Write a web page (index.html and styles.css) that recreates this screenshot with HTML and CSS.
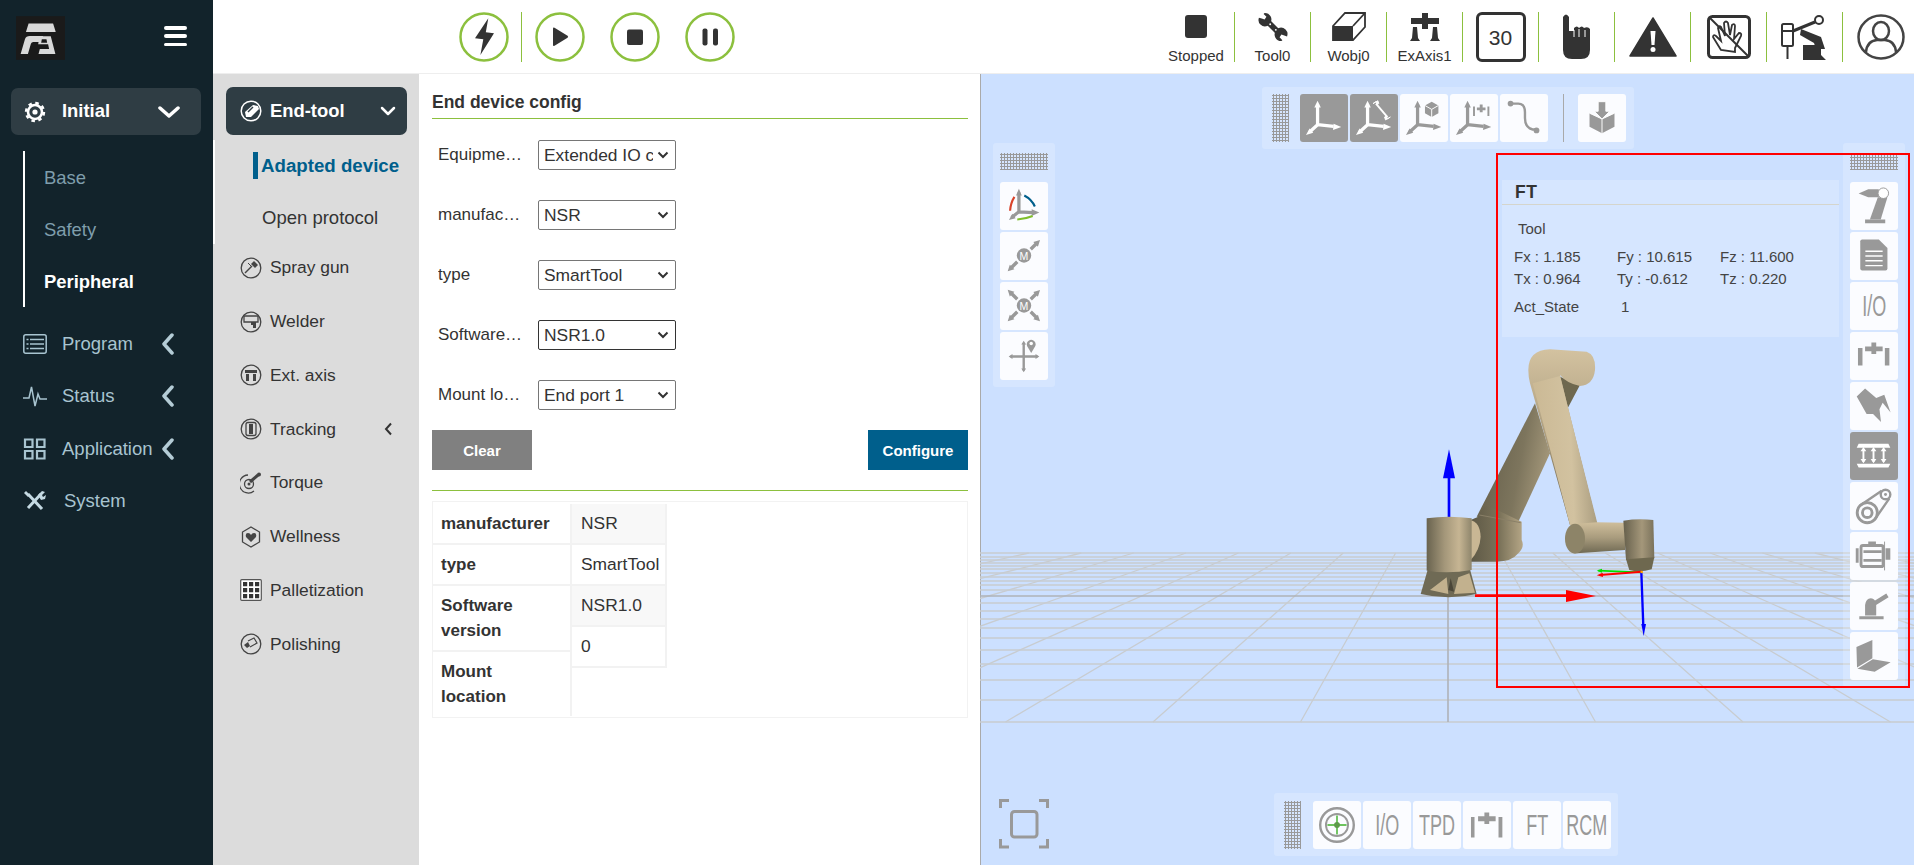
FILE: index.html
```html
<!DOCTYPE html>
<html lang="en">
<head>
<meta charset="utf-8">
<title>Robot controller</title>
<link rel="stylesheet" href="styles.css">
</head>
<body>
<svg class="defs" width="0" height="0">
  <defs>
    <symbol id="axes" viewBox="0 0 50 50">
      <path d="M18.3 32V11M18.3 32L35 33.8M18.3 32L10 39.5" fill="none" stroke="currentColor" stroke-width="3.400"/>
      <path d="M18.3 7l-3.4 7h6.8zM43 34.5l-8-3.600-.6 6.600zM6.200 42.800l7.600-2.400-3.800-4.400z" fill="currentColor"/>
    </symbol>
    <symbol id="arrowset" viewBox="0 0 50 50">
      <path d="M8 41l7-2.200-4.800-4.800zM41.700 8.300l-7 2.200 4.800 4.800z" fill="#999"/>
      <path d="M12 37l6-6M38 12l-6 6" stroke="#999" stroke-width="3.500"/>
      <circle cx="25" cy="24.500" r="7.500" fill="#999"/>
      <text x="25" y="29" class="m-letter">M</text>
    </symbol>
  </defs>
</svg>

<aside class="sidebar">
  <div class="brand">
    <svg class="logo" viewBox="48 48 148 132" width="49" height="44">
      <rect x="48" y="48" width="148" height="132" fill="#1a1a1a"/>
      <path d="M86 70h74l8 26H78z" fill="#d9d9d9"/>
      <path d="M62 162l13-44q3-10 15-10h40l-5 18h-25q-5 0-7 5l-9 31z" fill="#d9d9d9"/>
      <path d="M116 162l4-15h28l-3-14h-30l4-24h34l14 53z" fill="#d9d9d9"/>
      <path d="M124 128h18l-2-10h-14z" fill="#1a1a1a"/>
    </svg>
    <div class="burger"><i></i><i></i><i></i></div>
  </div>

  <div class="pill main-pill">
    <svg class="side-icon" viewBox="0 0 24 24" width="24" height="24">
      <circle cx="12" cy="12" r="7" fill="none" stroke="#fff" stroke-width="2.600"/>
      <circle cx="12" cy="12" r="2.600" fill="#fff"/>
      <circle cx="12" cy="12" r="9" fill="none" stroke="#fff" stroke-width="2.400" stroke-dasharray="3.500 3.570"/>
    </svg>
    <span class="pill-label">Initial</span>
    <svg class="pill-chev" viewBox="0 0 22 12" width="22" height="12"><path d="M2 2l9 8 9-8" fill="none" stroke="#fff" stroke-width="3.500" stroke-linecap="round" stroke-linejoin="round"/></svg>
  </div>

  <ul class="side-sub">
    <li>Base</li>
    <li>Safety</li>
    <li class="current">Peripheral</li>
  </ul>

  <ul class="side-main">
    <li>
      <svg class="side-icon" viewBox="0 0 24 20" width="24" height="20"><rect x=".8" y=".8" width="22.400" height="18.400" rx="2" fill="none" stroke="#a8c4d0" stroke-width="1.500"/><path d="M7 5.500h14M7 10h14M7 14.500h14M3.500 5.500h2M3.500 10h2M3.500 14.500h2" stroke="#a8c4d0" stroke-width="1.500"/></svg>
      <span>Program</span>
      <svg class="side-chev" viewBox="0 0 14 22" width="14" height="22"><path d="M11 2L3 11l8 9" fill="none" stroke="#b4ccd6" stroke-width="3.500" stroke-linecap="round" stroke-linejoin="round"/></svg>
    </li>
    <li>
      <svg class="side-icon" viewBox="0 0 24 22" width="24" height="22"><path d="M0 13h6l2.500-11 3.500 19 3-12 2 5h7" fill="none" stroke="#a8c4d0" stroke-width="1.500"/></svg>
      <span>Status</span>
      <svg class="side-chev" viewBox="0 0 14 22" width="14" height="22"><path d="M11 2L3 11l8 9" fill="none" stroke="#b4ccd6" stroke-width="3.500" stroke-linecap="round" stroke-linejoin="round"/></svg>
    </li>
    <li>
      <svg class="side-icon" viewBox="0 0 24 22" width="24" height="22"><path d="M2 1.500h7.500v7.500H2zM14 1.500h7.500v7.500H14zM2 13h7.500v7.500H2zM14 13h7.500v7.500H14z" fill="none" stroke="#a8c4d0" stroke-width="2.200"/></svg>
      <span>Application</span>
      <svg class="side-chev" viewBox="0 0 14 22" width="14" height="22"><path d="M11 2L3 11l8 9" fill="none" stroke="#b4ccd6" stroke-width="3.500" stroke-linecap="round" stroke-linejoin="round"/></svg>
    </li>
    <li class="sys">
      <svg class="side-icon" viewBox="0 0 24 22" width="24" height="22"><path d="M5 18L18 4M5 4l14 15" stroke="#c5dae3" stroke-width="3"/><path d="M15 5l4-4 3 1-3 3 1 2 3-2-1 4-4 1z" fill="#c5dae3"/><path d="M3 1l4 4-2 2-4-4z" fill="#c5dae3"/></svg>
      <span>System</span>
    </li>
  </ul>
</aside>

<div class="workspace">
  <header class="topbar">
    <div class="run-group">
      <button class="round" type="button"><svg viewBox="0 0 50 50" width="50" height="50"><circle cx="25" cy="25" r="23.500" class="ring"/><path d="M29.300 6.300L16 26.300l8.300 1L21.400 43 35 21.300l-8.200-1z" fill="#333"/></svg></button>
      <span class="run-sep"></span>
      <button class="round" type="button"><svg viewBox="0 0 50 50" width="50" height="50"><circle cx="25" cy="25" r="23.500" class="ring"/><path d="M18 16.500q0-1.500 1.500-.8l13 8q1.300 1 0 2l-13 8q-1.500.7-1.500-.8z" fill="#333"/></svg></button>
      <button class="round" type="button"><svg viewBox="0 0 50 50" width="50" height="50"><circle cx="25" cy="25" r="23.500" class="ring"/><rect x="17" y="17.500" width="16" height="15.500" rx="2" fill="#333"/></svg></button>
      <button class="round" type="button"><svg viewBox="0 0 50 50" width="50" height="50"><circle cx="25" cy="25" r="23.500" class="ring"/><rect x="17.500" y="16.500" width="5" height="17" rx="2" fill="#333"/><rect x="28" y="16.500" width="5" height="17" rx="2" fill="#333"/></svg></button>
    </div>
    <div class="status-group">
      <div class="stat labelled">
        <svg viewBox="0 0 30 30" width="30" height="30"><rect x="4" y="3" width="22" height="23" rx="3" fill="#333"/></svg>
        <span>Stopped</span>
      </div>
      <div class="stat labelled">
        <svg viewBox="0 0 32 32" width="30" height="30"><path d="M9 9l15 15" stroke="#333" stroke-width="6"/><path d="M1 6a7 7 0 0 0 9 9l3-3a7 7 0 0 0-6-11L6 2l3 3-2 3-3-1z" fill="#333"/><path d="M31 26a7 7 0 0 0-9-9l-3 3a7 7 0 0 0 6 11l1-1-3-3 2-3 3 1z" fill="#333"/><circle cx="13" cy="13" r="1" fill="#fff"/><circle cx="19" cy="19" r="1" fill="#fff"/></svg>
        <span>Tool0</span>
      </div>
      <div class="stat labelled">
        <svg viewBox="0 0 34 30" width="34" height="30"><path d="M1 14L13 1h20v14L21 28H1z" fill="#fff" stroke="#333" stroke-width="1.800"/><path d="M1 14h20v14H1z" fill="#333"/><path d="M21 14L33 1" stroke="#333" stroke-width="1.800"/></svg>
        <span>Wobj0</span>
      </div>
      <div class="stat labelled">
        <svg viewBox="0 0 30 30" width="30" height="30"><path d="M12 1h6v5h11v6H18v5h-6v-5H1V6h11z" fill="#333"/><path d="M3 15h4l1 11 2 3H0l2-3zM23 15h4l1 11 2 3H20l2-3z" fill="#333"/></svg>
        <span>ExAxis1</span>
      </div>
      <div class="stat"><div class="speed">30</div></div>
      <div class="stat">
        <svg viewBox="0 0 30 46" width="30" height="46"><path d="M1 3q3-5 6 0v14h5v-3q3-3 5 0 3-3 5 0 4-2 6 1v21q0 9-9 9H10q-9 0-9-9z" fill="#333"/><path d="M12 16v7M17 15v8M23 16v7" stroke="#fff" stroke-width="1"/></svg>
      </div>
      <div class="stat">
        <svg viewBox="0 0 48 40" width="48" height="40"><path d="M24 1L47 39H1z" fill="#333" stroke="#333" stroke-linejoin="round" stroke-width="1.500"/><path d="M21.500 14h5l-1 14h-3z" fill="#fff"/><circle cx="24" cy="32.500" r="2.500" fill="#fff"/></svg>
      </div>
      <div class="stat">
        <svg viewBox="0 0 44 44" width="44" height="44"><rect x="1.500" y="1.500" width="41" height="41" rx="4" fill="none" stroke="#333" stroke-width="3"/><path d="M3 3l38 38" stroke="#333" stroke-width="2"/><path d="M14 35l-8-13q0-3 3-1l5 5-3-13q1-3 3-1l4 9-1-13q2-3 4 0l2 12 2-10q3-2 3 1l-1 13 5-6q3 0 2 3l-6 12v4z" fill="none" stroke="#333" stroke-width="1.800"/></svg>
      </div>
      <div class="stat">
        <svg viewBox="0 0 48 46" width="48" height="46"><rect x="1" y="10" width="11" height="22" rx="1.500" fill="none" stroke="#333" stroke-width="2"/><path d="M1 17h11M6.500 32v13" stroke="#333" stroke-width="2"/><path d="M12 17l22-9" stroke="#333" stroke-width="3" fill="none"/><path d="M20 15l20 8 4 12h-9l-2-6-14-8z" fill="#333"/><path d="M22 46V31h18v10l5 5z" fill="#333"/><circle cx="38" cy="6" r="4" fill="#fff" stroke="#333" stroke-width="2"/></svg>
      </div>
      <div class="stat">
        <svg viewBox="0 0 48 46" width="48" height="46"><ellipse cx="24" cy="23" rx="22.500" ry="21.500" fill="none" stroke="#444" stroke-width="2.500"/><ellipse cx="24" cy="17" rx="8" ry="9" fill="none" stroke="#444" stroke-width="2.500"/><path d="M9 38q1-11 11-12h8q10 1 11 12" fill="none" stroke="#444" stroke-width="2.500"/></svg>
      </div>
    </div>
  </header>

  <div class="body-row">
    <nav class="subnav">
      <span class="edge"></span>
      <div class="pill sub-pill">
        <svg class="nav-icon" viewBox="0 0 22 22" width="22" height="22"><circle cx="11" cy="11" r="9.800" fill="none" stroke="#fff" stroke-width="1.500"/><path d="M6 17l-1-5 8-7 5 1 1 3-8 8z" fill="#fff"/><path d="M8 12l5-5" stroke="#2f3d44" stroke-width="1.500"/></svg>
        <span class="pill-label">End-tool</span>
        <svg class="sub-chev" viewBox="0 0 16 10" width="16" height="10"><path d="M2 2l6 6 6-6" fill="none" stroke="#fff" stroke-width="2.500" stroke-linecap="round" stroke-linejoin="round"/></svg>
      </div>
      <ul class="nav-children">
        <li class="selected"><span>Adapted device</span></li>
        <li>Open protocol</li>
      </ul>
      <ul class="nav-list">
        <li><svg class="nav-icon" viewBox="0 0 22 22" width="22" height="22"><circle cx="11" cy="11" r="9.800" class="nc"/><path d="M5 16l7-7" stroke="#444" stroke-width="1.500"/><path d="M11 7l3-3 4 4-3 3z" fill="#444"/><path d="M8 6l3 3" stroke="#444"/></svg>Spray gun</li>
        <li><svg class="nav-icon" viewBox="0 0 22 22" width="22" height="22"><circle cx="11" cy="11" r="9.800" class="nc"/><path d="M4 5h14v6H4z" fill="none" stroke="#444" stroke-width="1.300"/><path d="M11 11h5v6h-3v-3h-2z" fill="#444"/></svg>Welder</li>
        <li><svg class="nav-icon" viewBox="0 0 22 22" width="22" height="22"><circle cx="11" cy="11" r="9.800" class="nc"/><path d="M5 6h12v3H5zM6 10h3v7H6zM13 10h3v7h-3z" fill="#444"/></svg>Ext. axis</li>
        <li><svg class="nav-icon" viewBox="0 0 22 22" width="22" height="22"><circle cx="11" cy="11" r="9.800" class="nc"/><rect x="6" y="4.500" width="10" height="13" rx="2" fill="none" stroke="#444" stroke-width="1.300"/><path d="M9 6h4v10H9z" fill="#444"/></svg>Tracking<svg class="track-chev" viewBox="0 0 9 14" width="9" height="14"><path d="M7 1.500L2 7l5 5.500" fill="none" stroke="#333" stroke-width="2"/></svg></li>
        <li><svg class="nav-icon" viewBox="0 0 22 22" width="22" height="22"><path d="M14 19a9 9 0 1 1-6-16" class="nc"/><circle cx="9" cy="12" r="4.500" class="nc"/><circle cx="9" cy="12" r="1.500" fill="#444"/><path d="M10 10l8-7" stroke="#444" stroke-width="3"/><circle cx="19" cy="2.500" r="2" fill="#444"/></svg>Torque</li>
        <li><svg class="nav-icon" viewBox="0 0 22 22" width="22" height="22"><path d="M11 1l8.500 5v10L11 21l-8.500-5V6z" class="nc"/><path d="M11 16l-5-5q-1-4 2-4 2 0 3 2 1-2 3-2 3 0 2 4z" fill="#444"/></svg>Wellness</li>
        <li><svg class="nav-icon" viewBox="0 0 22 22" width="22" height="22"><rect x=".7" y=".7" width="20.600" height="20.600" rx="1" fill="#fff" stroke="#555" stroke-width="1.200"/><path d="M3 3h4.200v4.200H3zM9 3h4.200v4.200H9zM15 3h4.200v4.200H15zM3 9h4.200v4.200H3zM9 9h4.200v4.200H9zM15 9h4.200v4.200H15zM3 15h4.200v4.200H3zM9 15h4.200v4.200H9zM15 15h4.200v4.200H15z" fill="#333"/></svg>Palletization</li>
        <li><svg class="nav-icon" viewBox="0 0 22 22" width="22" height="22"><circle cx="11" cy="11" r="9.800" class="nc"/><path d="M4 12l4-3 2 4-3 2z" fill="#444"/><path d="M8 8l6-3 3 5-7 4" fill="none" stroke="#444" stroke-width="1.200"/></svg>Polishing</li>
      </ul>
    </nav>

    <main class="config">
      <h2 class="config-title">End device config</h2>
      <div class="form-rows">
        <div class="form-row"><label class="form-label">Equipment type</label><select class="form-select"><option>Extended IO config</option></select></div>
        <div class="form-row"><label class="form-label">manufacturer</label><select class="form-select"><option>NSR</option></select></div>
        <div class="form-row"><label class="form-label">type</label><select class="form-select"><option>SmartTool</option></select></div>
        <div class="form-row"><label class="form-label">Software version</label><select class="form-select focused"><option>NSR1.0</option></select></div>
        <div class="form-row"><label class="form-label">Mount location</label><select class="form-select"><option>End port 1</option></select></div>
      </div>
      <div class="actions">
        <button class="btn btn-clear" type="button">Clear</button>
        <button class="btn btn-conf" type="button">Configure</button>
      </div>
      <div class="summary">
        <table class="sum-keys">
          <tr><th>manufacturer</th></tr>
          <tr><th>type</th></tr>
          <tr><th>Software<br>version</th></tr>
          <tr><th>Mount<br>location</th></tr>
        </table>
        <table class="sum-vals">
          <tr><td>NSR</td></tr>
          <tr><td>SmartTool</td></tr>
          <tr><td>NSR1.0</td></tr>
          <tr><td>0</td></tr>
        </table>
      </div>
    </main>

    <section class="viewport">
      <svg class="scene" viewBox="980 74 934 791" width="934" height="791">
        <defs>
          <linearGradient id="gBase" x1="0" x2="1" y1="0" y2="0"><stop offset="0" stop-color="#69634f"/><stop offset=".4" stop-color="#a4977a"/><stop offset=".72" stop-color="#c6b593"/><stop offset="1" stop-color="#8f866c"/></linearGradient>
          <linearGradient id="gRear" x1="0" x2="1" y1=".3" y2=".6"><stop offset="0" stop-color="#625c48"/><stop offset=".6" stop-color="#7d755d"/><stop offset="1" stop-color="#a89b7d"/></linearGradient>
          <linearGradient id="gFront" x1="0" x2="1" y1=".1" y2="0"><stop offset="0" stop-color="#cbb995"/><stop offset=".55" stop-color="#d2c2a0"/><stop offset="1" stop-color="#a09478"/></linearGradient>
          <linearGradient id="gElbow" x1="0" x2="0" y1="0" y2="1"><stop offset="0" stop-color="#d3c2a0"/><stop offset=".5" stop-color="#ab9c7d"/><stop offset="1" stop-color="#5f5a47"/></linearGradient>
          <linearGradient id="gWrist" x1="0" x2="0" y1="0" y2="1"><stop offset="0" stop-color="#cfbe9b"/><stop offset=".5" stop-color="#a89b7d"/><stop offset="1" stop-color="#6f6953"/></linearGradient>
          <linearGradient id="gTool" x1="0" x2="1" y1="0" y2="0"><stop offset="0" stop-color="#66604c"/><stop offset=".6" stop-color="#a4977a"/><stop offset="1" stop-color="#7a725b"/></linearGradient>
          <linearGradient id="gJoint" x1="0" x2="1" y1="0" y2="0"><stop offset="0" stop-color="#5e5946"/><stop offset=".55" stop-color="#7a7259"/><stop offset="1" stop-color="#b5a686"/></linearGradient>
        </defs>
        <g class="grid-lines">
          <path d="M980 553H1914M980 557H1914M980 560H1914M980 563H1914M980 566H1914M980 569H1914M980 573H1914M980 577H1914M980 581H1914M980 585H1914M980 590H1914M980 603H1914M980 611H1914M980 619H1914M980 628H1914M980 638H1914M980 650H1914M980 664H1914M980 680H1914M980 700H1914M980 722H1914"/>
          <path d="M1500.400 553L1595.500 722M1552.800 553L1743 722M1605.200 553L1890.500 722M1657.600 553L2038 722M1710 553L2185.500 722M1762.400 553L2333 722M1814.800 553L2480.500 722M1867.200 553L2628 722M1395.600 553L1300.500 722M1343.200 553L1153 722M1290.800 553L1005.500 722M1238.400 553L858 722M1186 553L710.500 722M1133.600 553L563 722M1081.200 553L415.500 722M1028.800 553L268 722"/>
        </g>
        <path class="grid-axis" d="M980 596H1914M1448 553V722"/>
        <g transform="translate(1380 340) scale(.33333)">
          <path d="M207 540V410" stroke="#0000ff" stroke-width="8"/>
          <path d="M207 328l-18 87h36z" fill="#0000ff"/>
          <path d="M285 767H570" stroke="#ff0000" stroke-width="8"/>
          <path d="M558 750l90 18-90 18z" fill="#ff0000"/>
          <path d="M290 530L465 190 510 340 415 545z" fill="url(#gRear)"/>
          <path d="M540 110L600 135 555 220 510 170z" fill="#6e684f"/>
          <path d="M295 530Q310 490 330 500L425 545 425 600Q435 620 415 640Q395 665 350 665L272 665V540z" fill="url(#gJoint)"/>
          <path d="M298 525L422 548" stroke="#8a8067" stroke-width="3" fill="none"/>
          <path d="M270 540Q300 545 302 590Q300 630 272 660z" fill="#c9b794"/>
          <path d="M142 693L122 762Q205 782 290 762L270 688z" fill="#6f6a55"/>
          <path d="M150 750L200 712 205 762zM222 762L235 712 268 700 285 758z" fill="#c2b18e"/>
          <path d="M205 750L212 715 222 755z" fill="#4a4638"/>
          <path d="M140 535Q205 525 275 535V690Q205 702 140 692z" fill="url(#gBase)"/>
          <path d="M445 90Q445 30 510 28L620 35Q648 45 645 90Q640 135 600 138Q560 130 540 105L650 550 570 555 450 130Q445 110 445 90z" fill="url(#gElbow)"/>
          <path d="M458 130L540 108 652 550 570 556z" fill="url(#gFront)"/>
          <path d="M585 552L650 547 735 548V630L590 640z" fill="url(#gWrist)"/>
          <ellipse cx="585" cy="596" rx="30" ry="45" fill="#8d8468"/>
          <path d="M730 542Q775 535 820 540L823 655 738 660z" fill="url(#gTool)"/>
          <path d="M738 658L823 652 815 688Q780 698 748 690z" fill="#6e684f"/>
          <path d="M785 697L655 692" stroke="#00e000" stroke-width="5"/>
          <path d="M650 692l16-6v12z" fill="#00e000"/>
          <path d="M785 695L660 705" stroke="#ff0000" stroke-width="6"/>
          <path d="M650 706l18-8 1 13z" fill="#ff0000"/>
          <path d="M784 697L790 860" stroke="#0000ff" stroke-width="7"/>
          <path d="M791 888l-7-36h14z" fill="#0000ff"/>
          <circle cx="785" cy="696" r="4" fill="#ffa500"/>
        </g>
      </svg>

      <div class="tool-panel panel-top">
        <span class="grip grip-v"></span>
        <div class="tool-row">
          <div class="tbtn active"><svg viewBox="0 0 50 50" width="48" height="48"><use href="#axes"/></svg></div>
          <div class="tbtn active"><svg viewBox="0 0 50 50" width="48" height="48"><use href="#axes"/><path d="M27 10l12 14" stroke="#fff" stroke-width="2"/><path d="M24 10l3-2 1 3 2-1-1-3zM42 24l-3 2-1-3-2 1 1 3z" fill="#fff" stroke="#fff"/></svg></div>
          <div class="tbtn"><svg viewBox="0 0 50 50" width="48" height="48"><use href="#axes"/><path d="M33 8l7 4v8l-7 4-7-4v-8z" fill="#999"/><path d="M26 12l7 4 7-4M33 16v8" stroke="#fff" stroke-width="1" fill="none"/></svg></div>
          <div class="tbtn"><svg viewBox="0 0 50 50" width="48" height="48"><use href="#axes"/><path d="M24 13h2v10h-2zM39 13h2v10h-2zM28 14h9v3h-9zM31 11h3v8h-3z" fill="#999"/></svg></div>
          <div class="tbtn"><svg viewBox="0 0 50 50" width="48" height="48"><circle cx="11" cy="10" r="3" fill="#999"/><circle cx="38" cy="38" r="3" fill="#999"/><path d="M13 10h6q7 0 7 9v6q0 10 8 12h3" fill="none" stroke="#999" stroke-width="2.500"/></svg></div>
          <span class="top-sep"></span>
          <div class="tbtn"><svg viewBox="0 0 50 50" width="48" height="48"><path d="M25 26L12 20v14l13 7 13-7V20z" fill="#999"/><path d="M12 20l13 6 13-6M25 26v15" stroke="#fff" fill="none"/><path d="M21 8h8v10h4l-8 8-8-8h4z" fill="#999" stroke="#fff"/></svg></div>
        </div>
      </div>

      <div class="tool-panel panel-left">
        <span class="grip grip-h"></span>
        <div class="tbtn"><svg viewBox="0 0 50 50" width="48" height="48"><path d="M19.700 31V11M19.700 31L35 32M19.700 31L12 37" stroke="#999" stroke-width="3.400" fill="none"/><path d="M19.700 7l-3 7h6zM41 31.700l-8-3.400v7zM9.300 39.700l7-2-3.500-4.500z" fill="#999"/><path d="M15 15.500Q11 22 10.500 30" stroke="#d9432a" stroke-width="2.200" fill="none"/><path d="M25.300 14Q33 18 36.300 25.500" stroke="#005f8c" stroke-width="2.200" fill="none"/><path d="M18 39Q27 38.500 34 35.500" stroke="#7fbf2a" stroke-width="2.200" fill="none"/></svg></div>
        <div class="tbtn"><svg viewBox="0 0 50 50" width="48" height="48"><use href="#arrowset"/></svg></div>
        <div class="tbtn"><svg viewBox="0 0 50 50" width="48" height="48"><use href="#arrowset"/><path d="M8 8l7 2.200-4.800 4.800zM41.700 41l-7-2.200 4.800-4.800z" fill="#999"/><path d="M12 12l6 6M38 37l-6-6" stroke="#999" stroke-width="3.500"/></svg></div>
        <div class="tbtn"><svg viewBox="0 0 50 50" width="48" height="48"><path d="M24.700 12V40M11 25.500H39" stroke="#999" stroke-width="2.500"/><path d="M24.700 9l-2.500 4h5zM24.700 42l-2.500-4h5zM9 25.500l4-2.500v5zM41 25.500l-4-2.500v5z" fill="#999"/><path d="M32.500 22l-4-7a4.600 4.600 0 1 1 8 0z" fill="#999"/><circle cx="32.500" cy="12" r="1.800" fill="#fff"/></svg></div>
      </div>

      <div class="tool-panel panel-right">
        <span class="grip grip-h"></span>
        <div class="tbtn"><svg viewBox="0 0 50 50" width="48" height="48"><path d="M9 12l10-4.500h11V16H19z" fill="#999"/><path d="M29 16h10l-7 23H20.700z" fill="#999"/><path d="M15.700 39h21v4h-21z" fill="#999"/><circle cx="34.700" cy="11.700" r="5.500" fill="#fff" stroke="#999"/></svg></div>
        <div class="tbtn"><svg viewBox="0 0 50 50" width="48" height="48"><path d="M12.700 7.700H30l9 9V38q0 2-2 2H12.700q-2 0-2-2V9.700q0-2 2-2z" fill="#999"/><path d="M16 20h18M16 25h18M16 30h18M16 35h18" stroke="#fff" stroke-width="1.500"/></svg></div>
        <div class="tbtn"><span class="tall">I/O</span></div>
        <div class="tbtn"><svg viewBox="0 0 50 50" width="48" height="48"><path d="M8.300 16.700H13V35H8.300zM36.300 16.700H41V35h-4.700zM15.700 15H22.300V11h5v4H34v5H15.700zM22.300 20h5v3h-5z" fill="#999"/></svg></div>
        <div class="tbtn"><svg viewBox="0 0 50 50" width="48" height="48"><path d="M7 15l8.700-8.300L27.300 16.700l8.400-3.400 6.600 18.400L34 21.700l-3.300 6.600 1.600 13.400L24 33.300h-6.700L10.700 21.700z" fill="#999"/></svg></div>
        <div class="tbtn active"><svg viewBox="0 0 50 50" width="48" height="48"><path d="M9 12.300h31l2 4H7zM7 33h35l-2 4H9z" fill="#fff"/><path d="M14 18v13M24.500 18v13M35 18v13" stroke="#fff" stroke-width="2"/><path d="M14 15.500l-3 4.500h6zM14 32.500l-3-4.500h6zM24.500 15.500l-3 4.500h6zM24.500 32.500l-3-4.500h6zM35 15.500l-3 4.500h6zM35 32.500l-3-4.500h6z" fill="#fff"/></svg></div>
        <div class="tbtn"><svg viewBox="0 0 50 50" width="48" height="48"><circle cx="18" cy="32" r="10.500" fill="none" stroke="#999" stroke-width="3"/><circle cx="18" cy="32" r="5" fill="none" stroke="#999" stroke-width="3"/><circle cx="37" cy="13" r="5" fill="none" stroke="#999" stroke-width="2.500"/><circle cx="37" cy="13" r="1.500" fill="#999"/><path d="M10.500 24.500L33 9M25.500 39.500L41 17" stroke="#999" stroke-width="2.500"/></svg></div>
        <div class="tbtn"><svg viewBox="0 0 50 50" width="48" height="48"><rect x="11.500" y="14" width="23" height="22" rx="2" fill="none" stroke="#999" stroke-width="3"/><path d="M14 19h19v3H14zM14 28h19v3H14zM19 10h8v3h-8zM6 17h3v15H6zM37 17h5v12h-5z" fill="#999"/><path d="M36 10v30" stroke="#999"/></svg></div>
        <div class="tbtn"><svg viewBox="0 0 50 50" width="48" height="48"><path d="M9.700 35.700h25.300v3H9.700zM15.700 35V24q1-7 6-7t5.600 7v11z" fill="#999"/><path d="M26 22l13-8" stroke="#999" stroke-width="4.500"/></svg></div>
        <div class="tbtn"><svg viewBox="0 0 50 50" width="48" height="48"><path d="M6.700 15.700L23.300 8.300v19L7.300 37zM7.800 38.300L23.800 28.500l18.500 3-16.600 9.800z" fill="#999"/></svg></div>
      </div>

      <div class="tool-panel panel-bottom">
        <span class="grip grip-v"></span>
        <div class="tool-row">
          <div class="tbtn"><svg viewBox="0 0 50 50" width="48" height="48"><circle cx="25" cy="25" r="17.500" fill="none" stroke="#999" stroke-width="2.500"/><circle cx="25" cy="25" r="11.500" fill="none" stroke="#999" stroke-width="2"/><path d="M25 15v20M15 25h20" stroke="#3fb02a" stroke-width="1.500"/><circle cx="25" cy="25" r="3" fill="#5c9a4a"/></svg></div>
          <div class="tbtn"><span class="tall">I/O</span></div>
          <div class="tbtn"><span class="tall">TPD</span></div>
          <div class="tbtn"><svg viewBox="0 0 50 50" width="48" height="48"><path d="M8.300 16.700H12V38H8.300zM37 16.700h4V38h-4zM15.700 16H22.300V12h5v4H34v5H15.700zM22.300 21h5v3h-5z" fill="#999"/></svg></div>
          <div class="tbtn"><span class="tall">FT</span></div>
          <div class="tbtn"><span class="tall">RCM</span></div>
        </div>
      </div>

      <svg class="fullscreen" viewBox="0 0 50 50" width="50" height="50">
        <rect x="12.500" y="12.500" width="25.500" height="25.500" rx="3" fill="none" stroke="#999" stroke-width="3"/>
        <path d="M1.500 9V1.500H10M40 1.500h8.500V9M1.500 40v8h8.500M40 48h8.500v-8" fill="none" stroke="#999" stroke-width="3"/>
      </svg>

      <div class="ft-panel">
        <h3 class="ft-title">FT</h3>
        <div class="ft-tool">Tool</div>
        <div class="ft-grid">
          <span>Fx : 1.185</span><span>Fy : 10.615</span><span>Fz : 11.600</span>
          <span>Tx : 0.964</span><span>Ty : -0.612</span><span>Tz : 0.220</span>
        </div>
        <div class="ft-state"><span>Act_State</span><span>1</span></div>
      </div>

      <div class="annotation"></div>
    </section>
  </div>
</div>
</body>
</html>
```
FILE: styles.css
```css
* { box-sizing: border-box; }
html, body { margin: 0; height: 865px; overflow: hidden; }
body { display: flex; font-family: "Liberation Sans", Arial, sans-serif; color: #333; background: #fff; }
ul { list-style: none; margin: 0; padding: 0; }
.defs { position: absolute; }
.m-letter { font: 11px "Liberation Sans", sans-serif; fill: #fff; text-anchor: middle; }

.sidebar { width: 213px; height: 865px; flex: none; background: #12232b; color: #a8c4d0; }
.brand { height: 88px; padding: 16px 26px 0 16px; display: flex; justify-content: space-between; }
.burger { width: 23px; height: 20px; margin-top: 10px; display: flex; flex-direction: column; justify-content: space-between; }
.burger i { display: block; height: 3.500px; background: #fff; border-radius: 2px; }
.pill { display: flex; align-items: center; color: #fff; background: #2f3d44; border-radius: 7px; }
.pill-label { font-size: 18.400px; font-weight: 700; }
.main-pill { width: 190px; height: 47px; margin-left: 11px; padding-left: 12px; }
.main-pill .side-icon { margin-right: 15px; }
.main-pill .pill-label { margin-top: -2px; }
.pill-chev { margin-left: auto; margin-right: 21px; }
.side-sub { margin: 18px 0 0 23px; border-left: 2px solid #fff; padding-left: 19px; font-size: 18.400px; color: #7f9eac; }
.side-sub li { height: 52px; line-height: 54px; }
.side-sub li:first-child { margin-top: -2px; }
.side-sub .current { color: #fff; font-weight: 700; }
.side-main { margin-top: 11px; font-size: 18.500px; }
.side-main li { height: 52.330px; display: flex; align-items: center; padding-left: 23px; position: relative; }
.side-icon { flex: none; width: 24px; margin-right: 15px; }
.side-chev { position: absolute; left: 161px; top: 15px; }
.sys span { margin-left: 2px; color: #a8c4d0; }

.workspace { flex: 1; min-width: 0; display: flex; flex-direction: column; }
.topbar { height: 74px; flex: none; border-bottom: 1px solid #eee; display: flex; justify-content: space-between; }
.run-group { display: flex; align-items: flex-start; padding: 12px 0 0 246px; }
.round { width: 50px; height: 50px; padding: 0; border: 0; background: none; margin-right: 25px; }
.round svg { display: block; }
.ring { fill: none; stroke: #8cc03e; stroke-width: 2.500; }
.run-sep { width: 1px; height: 50px; background: #8cc03e; margin: 0 13px 0 -13px; }
.status-group { display: flex; padding: 12px 0 0 0; margin-right: -4px; }
.stat { width: 76px; height: 50px; border-left: 1px solid #8cc03e; display: flex; flex-direction: column; align-items: center; justify-content: center; font-size: 15px; line-height: 17px; color: #333; }
.stat:first-child { border-left: 0; }
.stat.labelled { justify-content: flex-start; }
.stat.labelled svg { display: block; flex: none; }
.stat.labelled span { margin-top: 5px; }
.speed { width: 50px; height: 50px; border: 3px solid #333; border-radius: 6px; display: flex; align-items: center; justify-content: center; font-size: 21px; }

.body-row { flex: 1; min-height: 0; display: flex; }
.subnav { width: 206px; flex: none; background: #dcdcdc; padding: 13px 0 0 13px; position: relative; }
.edge { position: absolute; left: 0; top: 66px; width: 2px; height: 104px; background: #fff; }
.sub-pill { width: 181px; height: 48px; padding-left: 14px; }
.nav-icon { flex: none; margin-right: 8px; }
.sub-chev { margin-left: auto; margin-right: 11px; }
.nav-children { margin-top: 4px; font-size: 18.500px; }
.nav-children li { height: 53px; padding-left: 36px; line-height: 53px; }
.nav-children li + li { height: 52px; line-height: 52px; }
.selected span { display: inline-block; font-weight: 700; font-size: 18.700px; color: #005f8c; border-left: 5px solid #005f8c; line-height: 27px; padding-left: 3px; margin-left: -9px; }
.nav-list { margin-top: -3px; font-size: 17.400px; }
.nav-list li { height: 53.750px; padding-left: 14px; display: flex; align-items: center; position: relative; }
.nc { fill: none; stroke: #444; stroke-width: 1.300; }
.track-chev { position: absolute; left: 158px; top: 20px; }

.config { width: 561px; flex: none; padding: 10px 12px 0 13px; }
.config-title { margin: 0; height: 35px; line-height: 36px; font-size: 17.500px; font-weight: 700; border-bottom: 1px solid #8cc03e; color: #333; }
.form-rows { display: flex; flex-direction: column; gap: 30px; margin: 21px 0 20px; }
.form-row { display: flex; align-items: center; height: 30px; padding-left: 6px; }
.form-label { width: 86px; margin-right: 14px; font-size: 17px; white-space: nowrap; overflow: hidden; text-overflow: ellipsis; }
.form-select { width: 137.500px; height: 30px; font: 17.400px "Liberation Sans", sans-serif; color: #333; background: #fff url("data:image/svg+xml,%3Csvg xmlns='http://www.w3.org/2000/svg' viewBox='0 0 12 8' width='12' height='8'%3E%3Cpath d='M1.500 1.500L6 6l4.500-4.500' fill='none' stroke='%23333' stroke-width='2'/%3E%3C/svg%3E") no-repeat right 6px center; border: 1px solid #767676; border-radius: 2px; padding: 0 22px 0 5px; appearance: none; }
.form-select.focused { border-color: #333; }
.actions { display: flex; justify-content: space-between; padding-bottom: 20px; border-bottom: 1px solid #8cc03e; }
.btn { width: 100px; height: 40px; border: 0; color: #fff; font: 700 15px "Liberation Sans", sans-serif; }
.btn-clear { background: #808080; }
.btn-conf { background: #005f8c; }
.summary { margin-top: 10px; height: 217px; border: 1.500px solid #f2f2f2; display: flex; align-items: flex-start; padding-top: 1.500px; font-size: 17.400px; line-height: 25px; }
table { border-collapse: collapse; }
.sum-keys { width: 139px; }
.sum-keys th { text-align: left; font-weight: 700; font-size: 17px; border: 1px solid #f2f2f2; border-width: 0 2px 2px 0; padding: 7px 8px; }
.sum-keys tr:last-child th { border-bottom: 0; }
.sum-vals { width: 95px; margin-left: 0; }
.sum-vals td { border: 2px solid #f2f2f2; border-width: 0 2px 2px 0; padding: 7px 6px 7px 9px; white-space: nowrap; }
.sum-vals tr:nth-child(odd) td { background: #f8f8f8; }

.viewport { flex: 1; min-width: 0; position: relative; background: #cce0ff; box-shadow: inset 1px 0 #aaa; overflow: hidden; }
.scene { position: absolute; left: 0; top: 0; }
.grid-lines path { fill: none; stroke: #c8ccd0; stroke-width: 1.300; }
.grid-axis { fill: none; stroke: #afb2b8; stroke-width: 1.600; }
.tool-panel { position: absolute; background: rgba(255, 255, 255, .2); border-radius: 3px; padding: 6px; display: flex; }
.tool-row { display: flex; align-items: center; }
.panel-top { left: 282px; top: 13px; width: 372px; height: 62px; padding-left: 10px; align-items: center; gap: 10px; }
.panel-bottom { left: 294px; top: 719px; width: 344px; height: 63px; padding-left: 10px; align-items: center; gap: 11px; }
.panel-left, .panel-right { width: 62px; flex-direction: column; top: 69px; padding-top: 10px; }
.panel-left { left: 13px; height: 244px; }
.panel-right { left: 863px; height: 544px; }
.grip { display: block; flex: none; background-image: radial-gradient(circle, #999 1px, transparent 1.200px); background-size: 3px 3px; }
.grip-v { width: 17px; height: 48px; }
.grip-h { width: 48px; height: 17px; margin: 0 1px 11px; }
.tbtn { width: 50px; height: 50px; flex: none; border: 1px solid transparent; background: #fbfcff; background-clip: padding-box; border-radius: 4px; color: #999; display: flex; align-items: center; justify-content: center; overflow: hidden; }
.tbtn.active { background-color: #999; color: #fff; }
.tall { display: block; font-size: 20px; line-height: 20px; color: #999; transform: scale(.9, 1.47); white-space: nowrap; }
.top-sep { width: 1px; height: 48px; background: #a9a9a9; margin: 0 13px 0 14px; }
.fullscreen { position: absolute; left: 19px; top: 725px; }

.ft-panel { position: absolute; left: 522px; top: 106px; width: 337px; height: 157px; background: rgba(255, 255, 255, .2); font-size: 15px; color: #444; }
.ft-title { margin: 0; height: 25px; line-height: 25px; padding-left: 13px; font-size: 17.500px; font-weight: 700; letter-spacing: .5px; color: #333; border-bottom: 1px solid #d5d5cc; }
.ft-tool { margin: 13px 0 0 16px; line-height: 22px; }
.ft-grid { display: grid; grid-template-columns: 103px 103px 103px; margin: 6px 0 0 12px; line-height: 22px; }
.ft-state { display: flex; margin: 6px 0 0 12px; line-height: 22px; }
.ft-state span:first-child { width: 107px; }

.annotation { position: absolute; left: 516px; top: 79px; width: 414px; height: 535px; border: 2px solid #f00; }
```
